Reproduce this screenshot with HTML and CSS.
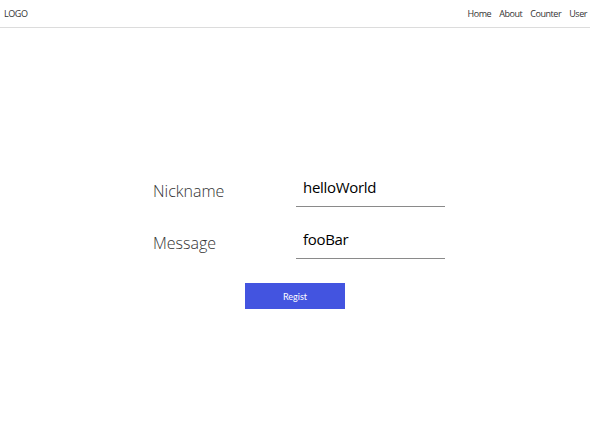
FILE: index.html
```html
<!DOCTYPE html>
<html>
<head>
<meta charset="utf-8">
<link rel="stylesheet" href="styles.css">
</head>
<body>
<header class="topbar">
  <div class="logo">LOGO</div>
  <nav class="nav">
    <a href="#">Home</a>
    <a href="#">About</a>
    <a href="#">Counter</a>
    <a href="#">User</a>
  </nav>
</header>
<main class="main">
  <form class="form">
    <div class="row">
      <label class="label">Nickname</label>
      <input class="field" type="text" value="helloWorld">
    </div>
    <div class="row">
      <label class="label">Message</label>
      <input class="field" type="text" value="fooBar">
    </div>
    <button class="btn" type="button">Regist</button>
  </form>
</main>
</body>
</html>
```

FILE: styles.css
```css
html, body {
  margin: 0;
  padding: 0;
  background: #fff;
  font-family: "Open Sans", "Liberation Sans", sans-serif;
  color: #222;
}
.topbar {
  height: 27px;
  border-bottom: 1px solid #dcdcdc;
  display: flex;
  align-items: center;
  justify-content: space-between;
  padding: 0 3px 0 4px;
  font-size: 9px;
  letter-spacing: -0.45px;
  color: #333;
}
.nav {
  display: flex;
  gap: 8px;
}
.nav a {
  color: #333;
  text-decoration: none;
}
.main {
  padding-top: 143px;
  display: flex;
  justify-content: center;
}
.form {
  width: 292px;
  margin-left: 8px;
  display: flex;
  flex-direction: column;
}
.row {
  display: flex;
  align-items: center;
  height: 36px;
  margin-bottom: 16px;
}
.label {
  width: 143px;
  font-size: 16px;
  font-weight: 300;
  color: #333;
  padding-top: 4px;
}
.field {
  width: 149px;
  box-sizing: border-box;
  height: 36px;
  border: none;
  border-bottom: 1px solid #8a8a8a;
  outline: none;
  padding: 0 0 4px 7px;
  font-family: "Open Sans", "Liberation Sans", sans-serif;
  font-size: 15px;
  letter-spacing: -0.3px;
  color: #000;
  background: transparent;
}
.btn {
  align-self: flex-start;
  margin-left: 92px;
  margin-top: 8px;
  width: 100px;
  height: 26px;
  border: none;
  background: #4354e0;
  color: #fff;
  font-family: "Lato", "Open Sans", sans-serif;
  font-size: 9px;
  padding: 0;
}
```
